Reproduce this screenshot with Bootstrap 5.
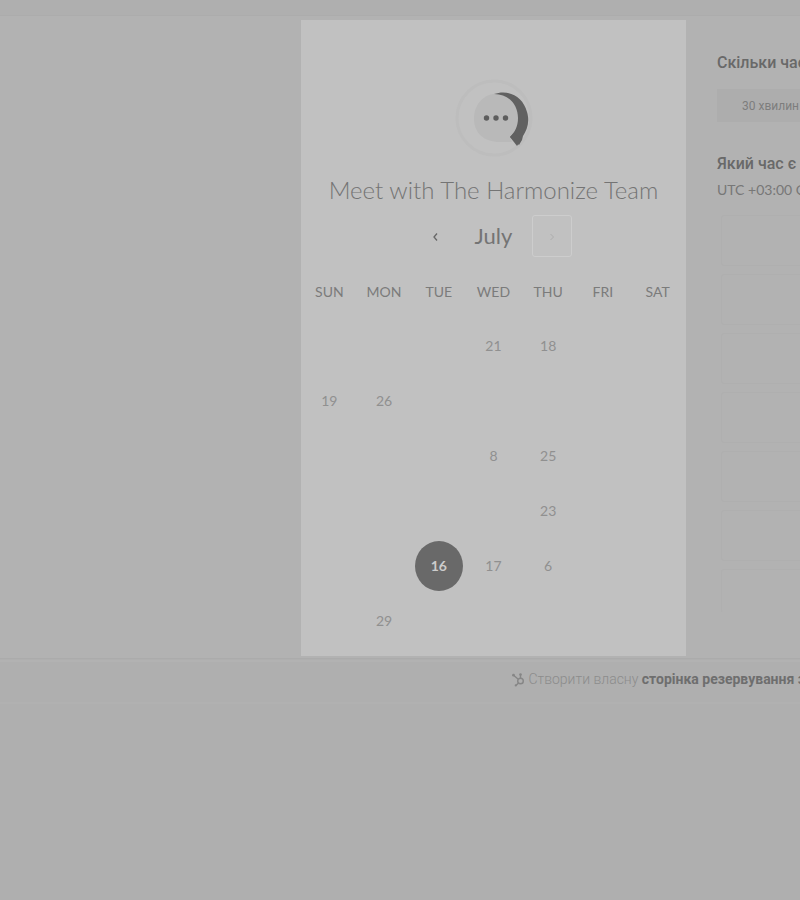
<!DOCTYPE html>
<html lang="uk">
<head>
<meta charset="utf-8">
<meta name="viewport" content="width=device-width, initial-scale=1">
<title>Meet with The Harmonize Team</title>
<link href="https://cdn.jsdelivr.net/npm/bootstrap@5.3.0/dist/css/bootstrap.min.css" rel="stylesheet">
<style>
body { background: #afafaf; color: #777; font-family: Lato, "Liberation Sans", sans-serif; font-size: 14px; line-height: 20px; overflow-x: hidden; }
.page-top { height: 16px; border-bottom: 1px solid #acacac; }
.booking { display: grid; grid-template-columns: 301fr 385fr 114fr; background: #b2b2b2; border-bottom: 1px solid #ababab; padding-bottom: 2px; }
.calendar-pane { background: #c1c1c1; margin-top: 4px; padding: 56px 1px 8px; }
.avatar { width: 84px; height: 84px; }
.title { font-size: 24px; line-height: 32px; font-weight: 300; color: #747474; margin: 14px 0 9px; }
.month { font-size: 22px; line-height: 40px; width: 76px; color: #747474; font-weight: 400; }
.step { width: 40px; height: 42px; padding: 0; border: 1px solid transparent; border-radius: 3px; background: none; color: #666; }
.step:disabled { border-color: #cdcdcd; color: #adadad; }
.days { table-layout: fixed; width: 100%; text-align: center; }
.days th { height: 61px; padding: 8px 0 0; font-size: 14px; font-weight: 400; color: #7b7b7b; text-align: center; }
.days td { height: 55px; padding: 0; color: #909090; font-weight: 400; }
.day { border: 0; background: none; padding: 0; color: inherit; width: 48px; height: 50px; border-radius: 50%; }
.day.chosen { background: #696969; color: #ccc; font-weight: 700; }
.time-pane { padding: 37px 0 0 31px; overflow: hidden; white-space: nowrap; }
.heading { font: 500 16px/20px Roboto, "Liberation Sans", sans-serif; color: #696969; margin: 0; }
.duration { display: block; width: 240px; height: 33px; margin: 16px 0 32px; border: 0; padding: 0 25px; background: #adadad; color: #7d7d7d; font: 12px/20px Roboto, "Liberation Sans", sans-serif; text-align: left; }
.zone { margin: 6px 0 15px; color: #777; }
.slot { display: block; width: 240px; height: 51px; margin: 0 0 8px 4px; border: 1px solid #afafaf; border-radius: 3px; background: none; }
.slot-last { border-bottom-color: transparent; margin-bottom: 0; height: 44px; }
.brand { border-top: 2px solid #b2b2b2; font: 14px/20px Roboto, sans-serif; margin-top: 1px; padding: 7px 0 13px 512px; white-space: nowrap; overflow: hidden; border-bottom: 2px solid #b1b1b1; }
.brand a { color: #8c8c8c; font-weight: 300; }
.brand strong { color: #6e6e6e; font-weight: 700; }
</style>
</head>
<body>
<div class="page-top"></div>
<main class="booking">
  <div></div>
  <section class="calendar-pane">
    <svg class="avatar d-block mx-auto" viewBox="0 0 84 84" aria-hidden="true">
      <circle cx="42" cy="42" r="37" fill="none" stroke="#bdbdbd" stroke-width="3"/>
      <path d="M42 18C56 13 71 20 75 36C78 46 75 54 71 60L70 64L67 69L58 61Z" fill="#616161"/>
      <path d="M42 18C57 18 66 29 66 42C66 50 63 56 58 61L60 66H48C31 66 22 56 22 43C22 29 31 19 42 18Z" fill="#b9b9b9"/>
      <path d="M58 61L62 57L70 63L65 70Z" fill="#616161"/>
      <g fill="#5d5d5d"><circle cx="34.5" cy="42" r="2.7"/><circle cx="44" cy="42" r="2.7"/><circle cx="53.5" cy="42" r="2.7"/></g>
    </svg>
    <h1 class="title text-center text-nowrap">Meet with The Harmonize Team</h1>
    <div class="d-flex justify-content-center align-items-center">
      <button class="step" type="button" aria-label="Попередній місяць"><svg width="8" height="10" viewBox="0 0 8 10" fill="none" stroke="currentColor" stroke-width="1.3"><path d="M5 1.5L2 5L5 8.5"/></svg></button>
      <h2 class="month text-center m-0">July</h2>
      <button class="step" type="button" disabled aria-label="Наступний місяць"><svg width="8" height="10" viewBox="0 0 8 10" fill="none" stroke="currentColor"><path d="M2.5 2L5.5 5L2.5 8"/></svg></button>
    </div>
    <table class="days">
      <thead><tr><th>SUN</th><th>MON</th><th>TUE</th><th>WED</th><th>THU</th><th>FRI</th><th>SAT</th></tr></thead>
      <tbody>
        <tr><td></td><td></td><td></td><td>21</td><td>18</td><td></td><td></td></tr>
        <tr><td>19</td><td>26</td><td></td><td></td><td></td><td></td><td></td></tr>
        <tr><td></td><td></td><td></td><td>8</td><td>25</td><td></td><td></td></tr>
        <tr><td></td><td></td><td></td><td></td><td>23</td><td></td><td></td></tr>
        <tr><td></td><td></td><td><button class="day chosen" type="button">16</button></td><td>17</td><td>6</td><td></td><td></td></tr>
        <tr><td></td><td>29</td><td></td><td></td><td></td><td></td><td></td></tr>
      </tbody>
    </table>
  </section>
  <section class="time-pane">
    <h2 class="heading">Скільки час</h2>
    <button class="duration" type="button">30 хвилин</button>
    <h2 class="heading">Який час є</h2>
    <p class="zone">UTC +03:00 С</p>
    <button class="slot" type="button" aria-label="Час 1"></button>
    <button class="slot" type="button" aria-label="Час 2"></button>
    <button class="slot" type="button" aria-label="Час 3"></button>
    <button class="slot" type="button" aria-label="Час 4"></button>
    <button class="slot" type="button" aria-label="Час 5"></button>
    <button class="slot" type="button" aria-label="Час 6"></button>
    <button class="slot slot-last" type="button" aria-label="Час 7"></button>
  </section>
</main>
<footer class="brand">
  <a class="text-decoration-none" href="#"><svg width="13" height="14" viewBox="0 0 13 14" fill="none" stroke="#868686" stroke-width="1.4" aria-hidden="true"><circle cx="8.5" cy="8" r="2.8"/><path d="M8.5 5V1M6.3 6.2L1.5 2.3M6.4 10L4 12.5"/><g fill="#868686" stroke="none"><circle cx="8.5" cy="1.5" r="1.3"/><circle cx="1.5" cy="2.2" r="1.4"/><circle cx="3.8" cy="12.4" r="1.1"/></g></svg> Створити власну <strong>сторінка резервування з</strong></a>
</footer>
<script src="https://cdn.jsdelivr.net/npm/bootstrap@5.3.0/dist/js/bootstrap.bundle.min.js"></script>
</body>
</html>
